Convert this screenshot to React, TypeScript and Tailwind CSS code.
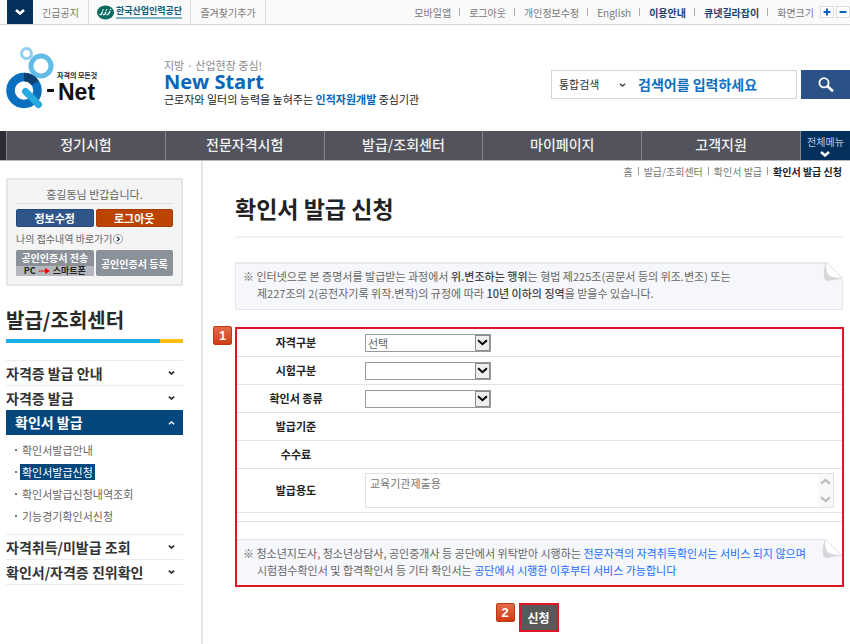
import { useState } from "react";
import type { ReactNode } from "react";

const utilLinks = [
  { label: "모바일앱" },
  { label: "로그아웃" },
  { label: "개인정보수정" },
  { label: "English" },
  { label: "이용안내", strong: true },
  { label: "큐넷길라잡이", strong: true },
];

const navItems = ["정기시험", "전문자격시험", "발급/조회센터", "마이페이지", "고객지원"];

const subItems = ["확인서발급안내", "확인서발급신청", "확인서발급신청내역조회", "기능경기확인서신청"];

function Chevron({ up = false, className = "", width = 2 }: { up?: boolean; className?: string; width?: number }) {
  return (
    <svg viewBox="0 0 10 6" className={className} fill="none" stroke="currentColor" strokeWidth={width} aria-hidden="true">
      <path d={up ? "M1 5 5 1.5 9 5" : "M1 1 5 4.5 9 1"} />
    </svg>
  );
}

function Logo() {
  return (
    <a href="#" aria-label="Q-Net" className="flex w-[94px] shrink-0">
      <svg viewBox="0 0 94 64" className="h-[64px] w-[94px]">
        <circle cx="20.500" cy="6.500" r="5" fill="none" stroke="#8fd0ef" strokeWidth="3" />
        <circle cx="35" cy="19" r="10" fill="none" stroke="#62bce6" strokeWidth="5" />
        <circle cx="18" cy="43.500" r="13.500" fill="none" stroke="#0c6fbe" strokeWidth="8.500" />
        <path d="M18 30a13.500 13.500 0 0 1 11 5.800" fill="none" stroke="#0d3f6e" strokeWidth="8.500" />
        <path d="M19.500 44.500 32.500 57.500" stroke="#28a9e1" strokeWidth="7" strokeLinecap="round" />
        <rect x="41" y="42" width="7" height="3" fill="#111" />
        <text x="51" y="31" fontSize="7" fontWeight="700" fill="#222" fontFamily="'Noto Sans CJK KR', sans-serif">
          자격의 모든것
        </text>
        <text x="52" y="53" fontSize="23" fontWeight="700" fill="#111" fontFamily="'Liberation Sans', sans-serif">
          Net
        </text>
      </svg>
    </a>
  );
}

function TopBar() {
  return (
    <div className="flex h-[25px] items-stretch border-b border-[#d4d4d4] bg-[#fafafa] pl-[7px] text-[10px] text-[#777]">
      <button aria-label="열기" className="flex w-[26px] items-center justify-center bg-[#04305c] text-white">
        <Chevron className="h-[6px] w-[10px]" width={2.6} />
      </button>
      <a href="#" className="flex w-[56px] items-center justify-center border-r border-[#dcdcdc]">긴급공지</a>
      <a href="#" className="flex w-[102px] items-center justify-center gap-[2px] border-r border-[#dcdcdc]">
        <svg viewBox="0 0 17 15" className="h-[15px] w-[17px]" aria-hidden="true">
          <ellipse cx="8.500" cy="7.500" rx="8.500" ry="7" fill="#0a6b5e" />
          <path d="M2.500 9.500q2 1 3-3M6 9.500q2 1 3-3M9.500 9.500q2 1 3.500-3.500" fill="none" stroke="#fff" strokeWidth="1.300" />
          <circle cx="6" cy="5" r=".8" fill="#fff" />
          <circle cx="9.500" cy="4.800" r=".8" fill="#fff" />
          <circle cx="13.500" cy="4.500" r=".8" fill="#fff" />
        </svg>
        <span className="flex flex-col">
          <span className="text-[9px] leading-[10px] font-bold whitespace-nowrap text-[#0b5f7c]">한국산업인력공단</span>
          <span className="mt-px h-[2px] bg-[#7fb2c2]" />
        </span>
      </a>
      <a href="#" className="flex w-[75px] items-center justify-center border-r border-[#dcdcdc]">즐겨찾기추가</a>
      <div className="ml-auto flex items-center">
        {utilLinks.map((link) => (
          <span key={link.label} className="flex items-center whitespace-nowrap">
            <a href="#" className={link.strong ? "font-bold text-[#1b3f70]" : ""}>{link.label}</a>
            <span className="mr-[9px] ml-[8px] h-[8px] w-px bg-[#aaa]" />
          </span>
        ))}
        <span>화면크기</span>
        <button aria-label="확대" className="ml-[6px] flex h-[12px] w-[14px] items-center justify-center border border-[#ddd] bg-white">
          <svg viewBox="0 0 8 8" className="size-[8px]" aria-hidden="true"><path d="M4 .5v7M.5 4h7" stroke="#0a66b8" strokeWidth="2" /></svg>
        </button>
        <button aria-label="축소" className="ml-[2px] flex h-[12px] w-[14px] items-center justify-center border border-[#ddd] bg-white">
          <svg viewBox="0 0 8 8" className="size-[8px]" aria-hidden="true"><path d="M.5 4h7" stroke="#0a66b8" strokeWidth="2" /></svg>
        </button>
      </div>
    </div>
  );
}

function Header() {
  return (
    <header className="flex h-[106px] items-start pl-[6px]">
      <div className="pt-[22px]"><Logo /></div>
      <div className="ml-[64px] pt-[32px] whitespace-nowrap">
        <p className="text-[11px] leading-[16px] text-[#8a8a8a]">지방 · 산업현장 중심!</p>
        <p className="font-['Open_Sans'] text-[20px] leading-[17px] font-bold text-[#0a66b8]">New Start</p>
        <p className="text-[11px] leading-[19px] text-[#222]">
          근로자와 일터의 능력을 높혀주는 <b className="text-[#0a66b8]">인적자원개발</b> 중심기관
        </p>
      </div>
      <form className="ml-auto flex gap-[4px] pt-[45px]" onSubmit={(e) => e.preventDefault()}>
        <div className="flex h-[29px] w-[246px] items-center border border-[#d4d4d4]">
          <div className="relative flex w-[78px] items-center">
            <select aria-label="검색 범위" className="w-full appearance-none bg-transparent pl-[7px] text-[11px] text-[#333] outline-none">
              <option>통합검색</option>
            </select>
            <Chevron className="pointer-events-none absolute right-[4px] h-[4px] w-[7px] text-[#444]" />
          </div>
          <input
            aria-label="검색어"
            placeholder="검색어를 입력하세요"
            className="ml-[8px] w-[150px] bg-transparent text-[14px] font-bold outline-none placeholder:text-[#0f6fc0] placeholder:opacity-100"
          />
        </div>
        <button aria-label="검색" className="flex h-[29px] w-[49px] items-center justify-center bg-[#2b5286]">
          <svg viewBox="0 0 16 16" className="size-[16px]" fill="none" stroke="#fff" aria-hidden="true">
            <circle cx="6" cy="5.800" r="4.600" strokeWidth="1.800" />
            <path d="m9.500 9.200 5.500 5" strokeWidth="2.600" />
          </svg>
        </button>
      </form>
    </header>
  );
}

function MainNav() {
  return (
    <nav className="flex h-[30px] border-b border-[#b8b8bc] bg-[#53535d]">
      <span className="w-[6px] bg-[#2c2c33]" />
      {navItems.map((item) => (
        <a key={item} href="#" className="flex flex-1 items-center justify-center border-l border-[#85858d] pb-[2px] text-[14px] font-medium text-[#f0f0f0]">
          {item}
        </a>
      ))}
      <button className="flex w-[50px] flex-col items-center justify-center gap-[2px] border-l border-[#85858d] bg-[#04305c] text-[10px] leading-[14px] text-[#b9cce0]">
        전체메뉴
        <Chevron className="h-[6px] w-[10px] text-white" width={2.6} />
      </button>
    </nav>
  );
}

function UserBox() {
  return (
    <section className="border-2 border-[#e6e6e6] bg-[#f4f4f4] px-[8px] pb-[8px]">
      <p className="border-b border-[#e2e2e2] pt-[6px] text-center text-[11px] leading-[17px] text-[#666]">홍길동님 반갑습니다.</p>
      <div className="mt-[5px] flex gap-[2px] text-[11px] font-bold text-white">
        <button className="h-[18px] flex-1 rounded-[2px] border border-[#234a7c] bg-[#2f5689] leading-[15px]">정보수정</button>
        <button className="h-[18px] flex-1 rounded-[2px] border border-[#a83c00] bg-[#ba4400] leading-[15px]">로그아웃</button>
      </div>
      <a href="#" className="flex h-[23px] items-center gap-px text-[10px] whitespace-nowrap text-[#666]">
        나의 접수내역 바로가기
        <svg viewBox="0 0 10 10" className="size-[10px]" fill="none" aria-hidden="true">
          <circle cx="5" cy="5" r="4.500" fill="#fff" stroke="#999" />
          <path d="m4 2.800 2.200 2.200L4 7.200" stroke="#1b3f70" strokeWidth="1.400" />
        </svg>
      </a>
      <div className="flex gap-[2px] font-bold whitespace-nowrap">
        <button className="flex h-[26px] flex-1 flex-col overflow-hidden rounded-[2px] bg-[#8b9199] text-white">
          <span className="h-[16px] w-full text-[10px] leading-[15px]">공인인증서 전송</span>
          <span className="flex h-[10px] w-full items-center justify-center gap-[3px] bg-[#b4b8be] text-[9px] leading-[10px] text-[#222]">
            PC
            <svg viewBox="0 0 11 6" className="h-[6px] w-[11px]" aria-hidden="true">
              <path d="M0 3h6" stroke="#e33" strokeWidth="2" strokeDasharray="1.500 .8" />
              <path d="M6 0 11 3 6 6z" fill="#e00" />
            </svg>
            스마트폰
          </span>
        </button>
        <button className="h-[26px] flex-1 rounded-[2px] bg-[#8b9199] text-[10px] text-white">공인인증서 등록</button>
      </div>
    </section>
  );
}

function MenuRow({ children }: { children: ReactNode }) {
  return (
    <a href="#" className="flex h-[25px] items-center justify-between border-t border-[#ececec] pr-[8px] text-[14px] font-bold text-[#333]">
      {children}
      <Chevron className="h-[4px] w-[7px]" width={2.6} />
    </a>
  );
}

function Sidebar() {
  return (
    <aside className="w-[203px] shrink-0 border-r-2 border-[#e6e6e6] pt-[17px] pr-[18px] pl-[6px]">
      <UserBox />
      <h2 className="mt-[19px] text-[20px] leading-[30px] font-bold text-[#2a2a2a]">발급/조회센터</h2>
      <div className="mt-[4px] flex h-[4px] bg-[#1cb0e6]">
        <span className="ml-auto w-[23px] bg-[#fdbf0f]" />
      </div>
      <nav className="mt-[17px] border-b border-[#ececec]">
        <MenuRow>자격증 발급 안내</MenuRow>
        <MenuRow>자격증 발급</MenuRow>
        <a href="#" className="flex h-[25px] items-center justify-between bg-[#04477d] pr-[8px] pl-[9px] text-[14px] font-bold text-white">
          확인서 발급
          <Chevron up className="h-[4px] w-[7px]" />
        </a>
        <ul className="pt-[4px] pb-[7px] pl-[9px] text-[11px] text-[#666]">
          {subItems.map((item, i) => (
            <li key={item} className="flex h-[22px] items-center gap-[3px]">
              <span className="size-[2px] bg-[#777]" />
              <a href="#" className={i === 1 ? "bg-[#04477d] px-[2px] leading-[16px] text-white" : "px-[2px] leading-[16px]"}>{item}</a>
            </li>
          ))}
        </ul>
        <MenuRow>자격취득/미발급 조회</MenuRow>
        <MenuRow>확인서/자격증 진위확인</MenuRow>
      </nav>
    </aside>
  );
}

function PageCurl() {
  return (
    <svg viewBox="0 0 20 20" className="size-[20px]" aria-hidden="true">
      <path d="M3 0h17v17z" fill="#fff" />
      <path d="M3 0Q0 8 1 15q.5 4.500 6 3.500L20 16.500 3 0Z" fill="#d6d6d8" />
      <path d="M3.500 .5Q2 8 5.500 13q3 3 14 2.800Z" fill="#fff" />
      <path d="M3.500 .5 19.500 16" stroke="#dcdce0" />
    </svg>
  );
}

function Badge({ children }: { children: ReactNode }) {
  return (
    <span className="flex size-[19px] items-center justify-center rounded-[2px] border border-[#b83c10] bg-linear-to-b from-[#e26a48] to-[#d23a10] font-['Liberation_Sans'] text-[13px] leading-none font-bold text-white">
      {children}
    </span>
  );
}

function Row({ label, htmlFor, tall = false, children }: { label: string; htmlFor?: string; tall?: boolean; children?: ReactNode }) {
  return (
    <div className={`flex items-center border-b border-[#e2e2e2] ${tall ? "h-[44px]" : "h-[28px]"}`}>
      <label htmlFor={htmlFor} className="w-[118px] shrink-0 text-center text-[11px] font-bold text-[#222]">{label}</label>
      <div className="flex flex-1 items-center pr-[8px] pl-[10px]">{children}</div>
    </div>
  );
}

function SelectBox({ id, option = "" }: { id: string; option?: string }) {
  return (
    <div className="relative flex">
      <select id={id} className="h-[18px] w-[126px] appearance-none border border-[#9a9a9a] bg-white pl-[2px] text-[11px] leading-[16px] text-[#666] outline-none">
        <option>{option}</option>
      </select>
      <span className="pointer-events-none absolute inset-y-px right-px flex w-[15px] items-center justify-center border border-[#8a8a8a] bg-[#efefef]">
        <Chevron className="h-[7px] w-[11px] text-black" width={1.8} />
      </span>
    </div>
  );
}

export default function App() {
  const [purpose, setPurpose] = useState("교육기관제출용");
  return (
    <div className="bg-white font-['Noto_Sans_CJK_KR',sans-serif]">
      <TopBar />
      <Header />
      <MainNav />
      <div className="flex min-h-[483px]">
        <Sidebar />
        <main className="flex-1 pr-[6px] pl-[32px]">
          <div className="flex h-[20px] items-center justify-end pr-[2px] text-[10px] text-[#777]">
            <a href="#">홈</a>
            <span className="mx-[5px] h-[8px] w-px bg-[#999]" />
            <a href="#">발급/조회센터</a>
            <span className="mx-[5px] h-[8px] w-px bg-[#999]" />
            <a href="#">확인서 발급</a>
            <span className="mx-[5px] h-[8px] w-px bg-[#999]" />
            <b className="text-[#222]">확인서 발급 신청</b>
          </div>
          <h1 className="mr-px border-b-2 border-[#f2f2f2] pt-[11px] pb-[12px] text-[23px] leading-[32px] font-bold text-[#222]">확인서 발급 신청</h1>
          <div className="relative mt-[24px] mr-px border border-t-2 border-[#e6e7ea] bg-[#f5f7fb] pt-[4px] pb-[7px] pl-[7px] text-[11px] leading-[17px] text-[#666]">
            <p>※ 인터넷으로 본 증명서를 발급받는 과정에서 <b className="font-medium text-[#444]">위.변조하는 행위</b>는 형법 제225조(공문서 등의 위조.변조) 또는</p>
            <p className="pl-[14px]">제227조의 2(공전자기록 위작.변작)의 규정에 따라 <b className="font-medium text-[#444]">10년 이하의 징역</b>을 받을수 있습니다.</p>
            <span className="absolute -top-[2px] -right-px"><PageCurl /></span>
          </div>
          <form onSubmit={(e) => e.preventDefault()}>
            <div className="relative mt-[17px] border-2 border-[#dd1728]">
              <span className="absolute -top-[3px] -left-[24px]"><Badge>1</Badge></span>
              <Row label="자격구분" htmlFor="qualification"><SelectBox id="qualification" option="선택" /></Row>
              <Row label="시험구분" htmlFor="exam"><SelectBox id="exam" /></Row>
              <Row label="확인서 종류" htmlFor="kind"><SelectBox id="kind" /></Row>
              <Row label="발급기준" />
              <Row label="수수료" />
              <Row label="발급용도" htmlFor="purpose" tall>
                <div className="flex h-[35px] flex-1 border border-[#e2e2e2]">
                  <textarea
                    id="purpose"
                    value={purpose}
                    onChange={(e) => setPurpose(e.target.value)}
                    className="flex-1 resize-none overflow-hidden px-[4px] pt-px text-[11px] leading-[17px] text-[#777] outline-none"
                  />
                  <span className="flex w-[15px] flex-col items-center justify-between bg-[#f8f8f8] py-[4px] text-[#bbb]">
                    <Chevron up className="h-[7px] w-[11px]" width={2} />
                    <Chevron className="h-[7px] w-[11px]" width={2} />
                  </span>
                </div>
              </Row>
              <div className="h-[9px] border-b border-[#e2e2e2]" />
              <div className="relative mt-[17px] border-t border-[#e0e1e5] bg-[#f5f7fb] pt-[5px] pb-[6px] pl-[6px] text-[11px] leading-[17px] text-[#666]">
                <p>※ 청소년지도사, 청소년상담사, 공인중개사 등 공단에서 위탁받아 시행하는 <span className="text-[#1a6dff]">전문자격의 자격취득확인서는 서비스 되지 않으며</span></p>
                <p className="pl-[14px]">시험점수확인서 및 합격확인서 등 기타 확인서는 <span className="text-[#1a6dff]">공단에서 시행한 이후부터 서비스 가능합니다</span></p>
                <span className="absolute -top-px right-0"><PageCurl /></span>
              </div>
            </div>
            <div className="mt-[16px] flex items-start justify-center pr-[25px]">
              <Badge>2</Badge>
              <button className="ml-[4px] h-[29px] w-[40px] border-2 border-[#dd1728] bg-[#595959] text-[12px] font-bold text-white">신청</button>
            </div>
          </form>
        </main>
      </div>
    </div>
  );
}
